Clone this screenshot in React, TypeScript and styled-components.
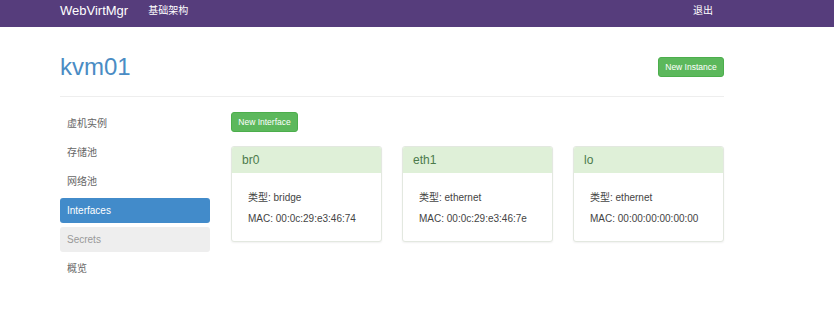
import React from "react";
import styled, { createGlobalStyle } from "styled-components";

const GlobalStyle = createGlobalStyle`
  html, body {
    margin: 0;
    padding: 0;
    background: #fff;
    font-family: "Liberation Sans", "Noto Sans CJK SC", sans-serif;
    color: #333;
  }
`;

// 상단 네비게이션
const Navbar = styled.div`
  height: 27px;
  background-color: #563d7c;
`;

const NavInner = styled.div`
  width: 664px;
  margin-left: 60px;
  height: 100%;
  display: flex;
  align-items: flex-start;
  padding-top: 3px;
  box-sizing: border-box;
`;

const Brand = styled.span`
  font-size: 13px;
  line-height: 15px;
  color: #fff;
  margin-right: 20px;
`;

const NavLink = styled.span`
  font-size: 10px;
  line-height: 15px;
  color: #fff;
`;

const NavRight = styled.span`
  margin-left: auto;
  margin-right: 11px;
  font-size: 10px;
  line-height: 15px;
  color: #fff;
`;

const Container = styled.div`
  width: 664px;
  margin-left: 60px;
`;

const PageHeader = styled.div`
  display: flex;
  align-items: center;
  justify-content: space-between;
  padding-top: 25px;
  padding-bottom: 14px;
  border-bottom: 1px solid #eee;
`;

const Title = styled.h1`
  margin: 0;
  font-size: 24px;
  font-weight: 400;
  color: #4a8cc4;
  line-height: 30px;
`;

type BtnProps = { $width: number };
const GreenButton = styled.button<BtnProps>`
  width: ${(p) => p.$width}px;
  height: 20px;
  padding: 0;
  border: 1px solid #4cae4c;
  border-radius: 3px;
  background-color: #5cb85c;
  color: #fff;
  font-family: "Liberation Sans", sans-serif;
  font-size: 8.5px;
  line-height: 18px;
  text-align: center;
`;

const Body = styled.div`
  display: flex;
  gap: 21px;
  padding-top: 14px;
`;

const Sidebar = styled.ul`
  list-style: none;
  margin: 0;
  padding: 0;
  width: 150px;
  display: flex;
  flex-direction: column;
  gap: 4px;
`;

type ItemProps = { $variant?: "active" | "disabled" };
const SideItem = styled.li<ItemProps>`
  height: 25px;
  line-height: 25px;
  padding: 0 7px;
  border-radius: 3px;
  font-size: 10px;
  background-color: ${(p) =>
    p.$variant === "active" ? "#428bca" : p.$variant === "disabled" ? "#eee" : "transparent"};
  color: ${(p) =>
    p.$variant === "active" ? "#fff" : p.$variant === "disabled" ? "#999" : "#666"};
`;

const Main = styled.div`
  flex: 1;
  display: flex;
  flex-direction: column;
  gap: 14px;
`;

const CardRow = styled.div`
  display: grid;
  grid-template-columns: repeat(3, 1fr);
  gap: 20px;
`;

const Card = styled.div`
  border: 1px solid #e3e8e0;
  border-radius: 3px;
  box-shadow: 0 1px 2px rgba(0, 0, 0, 0.06);
  background: #fff;
  overflow: hidden;
`;

const CardHeading = styled.div`
  height: 26px;
  line-height: 26px;
  padding: 0 10px;
  background-color: #dff0d8;
  color: #4b7a4b;
  font-size: 12px;
`;

const CardBody = styled.div`
  padding: 18px 16px 16px;
  display: flex;
  flex-direction: column;
  gap: 8px;
  font-size: 10px;
  line-height: 13px;
  color: #444;
`;

const ifaces = [
  { name: "br0", type: "bridge", mac: "00:0c:29:e3:46:74" },
  { name: "eth1", type: "ethernet", mac: "00:0c:29:e3:46:7e" },
  { name: "lo", type: "ethernet", mac: "00:00:00:00:00:00" },
];

export default function App() {
  return (
    <>
      <GlobalStyle />
      <Navbar>
        <NavInner>
          <Brand>WebVirtMgr</Brand>
          <NavLink>基础架构</NavLink>
          <NavRight>退出</NavRight>
        </NavInner>
      </Navbar>
      <Container>
        <PageHeader>
          <Title>kvm01</Title>
          <GreenButton $width={66}>New Instance</GreenButton>
        </PageHeader>
        <Body>
          <Sidebar>
            <SideItem>虚机实例</SideItem>
            <SideItem>存储池</SideItem>
            <SideItem>网络池</SideItem>
            <SideItem $variant="active">Interfaces</SideItem>
            <SideItem $variant="disabled">Secrets</SideItem>
            <SideItem>概览</SideItem>
          </Sidebar>
          <Main>
            <div>
              <GreenButton $width={67}>New Interface</GreenButton>
            </div>
            <CardRow>
              {ifaces.map((i) => (
                <Card key={i.name}>
                  <CardHeading>{i.name}</CardHeading>
                  <CardBody>
                    <div>类型: {i.type}</div>
                    <div>MAC: {i.mac}</div>
                  </CardBody>
                </Card>
              ))}
            </CardRow>
          </Main>
        </Body>
      </Container>
    </>
  );
}
